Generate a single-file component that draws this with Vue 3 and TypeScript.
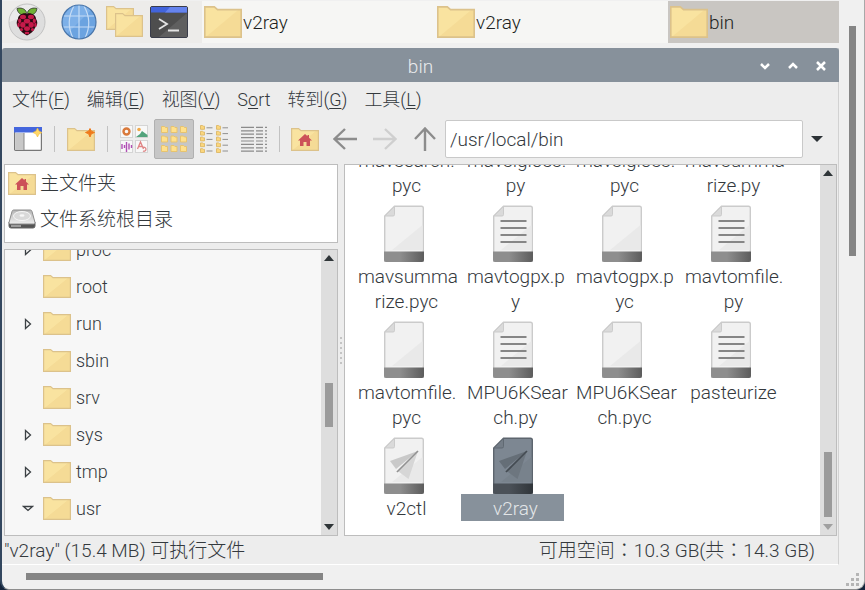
<script setup lang="ts">
import { ref } from 'vue'

interface FileEntry {
  name: string
  kind: 'blank' | 'script' | 'exec'
}
interface TreeNode {
  name: string
  state: 'closed' | 'open' | 'leaf'
}

const tasks = ['v2ray', 'v2ray', 'bin']
const menus = [
  { text: '文件', key: 'F' },
  { text: '编辑', key: 'E' },
  { text: '视图', key: 'V' },
  { text: 'Sort', key: '' },
  { text: '转到', key: 'G' },
  { text: '工具', key: 'L' },
]
const tree: TreeNode[] = [
  { name: 'proc', state: 'closed' },
  { name: 'root', state: 'leaf' },
  { name: 'run', state: 'closed' },
  { name: 'sbin', state: 'leaf' },
  { name: 'srv', state: 'leaf' },
  { name: 'sys', state: 'closed' },
  { name: 'tmp', state: 'closed' },
  { name: 'usr', state: 'open' },
]
// Names carry their own line breaks, as the icon view wraps by character.
const files: FileEntry[] = [
  { name: 'mavsearch.\npyc', kind: 'blank' },
  { name: 'mavsigloss.\npy', kind: 'script' },
  { name: 'mavsigloss.\npyc', kind: 'blank' },
  { name: 'mavsumma\nrize.py', kind: 'script' },
  { name: 'mavsumma\nrize.pyc', kind: 'blank' },
  { name: 'mavtogpx.p\ny', kind: 'script' },
  { name: 'mavtogpx.p\nyc', kind: 'blank' },
  { name: 'mavtomfile.\npy', kind: 'script' },
  { name: 'mavtomfile.\npyc', kind: 'blank' },
  { name: 'MPU6KSear\nch.py', kind: 'script' },
  { name: 'MPU6KSear\nch.pyc', kind: 'blank' },
  { name: 'pasteurize', kind: 'script' },
  { name: 'v2ctl', kind: 'exec' },
  { name: 'v2ray', kind: 'exec' },
]
const path = ref('/usr/local/bin')
const selected = ref('v2ray')
</script>

<template>
  <div class="viewer">
    <svg class="defs" aria-hidden="true">
      <defs>
        <linearGradient id="gFolder" x1="0" y1="0" x2="1" y2="1">
          <stop offset="0.5" stop-color="#f9e3a0" />
          <stop offset="0.52" stop-color="#f5db96" />
        </linearGradient>
        <linearGradient id="gFoot"><stop offset="0.4" stop-color="#8e8e8e" /><stop offset="1" stop-color="#5c5c5c" /></linearGradient>
        <linearGradient id="gFootSel"><stop offset="0.4" stop-color="#4b5158" /><stop offset="1" stop-color="#30353a" /></linearGradient>
        <linearGradient id="gDisk" x1="0" y1="0" x2="0" y2="1"><stop offset="0" stop-color="#b5b5b5" /><stop offset="1" stop-color="#efefef" /></linearGradient>
      </defs>
      <symbol id="folder" viewBox="0 0 28 23" preserveAspectRatio="none">
        <path d="M.6 22.4V.6h7L10 2.6h17.4v19.8z" fill="url(#gFolder)" stroke="#dcc28b" stroke-width="1.2" />
      </symbol>
      <symbol id="home" viewBox="0 0 28 23">
        <path d="M.6 22.4V.6h7L10 2.6h17.4v19.8z" fill="url(#gFolder)" stroke="#dcc28b" stroke-width="1.2" />
        <path d="M14 6l2.500 2.300V7H18v2.800l3 2.800h-2v5.300h-3.500V14h-3v3.900H9v-5.300H7z" fill="#cc5158" />
      </symbol>
    </svg>

    <div class="desktop">
      <nav class="taskbar">
        <button class="launch raspberry" aria-label="Menu">
          <svg width="38" height="38" viewBox="0 0 38 38">
            <circle cx="19" cy="19" r="18" fill="#dedede" stroke="#c2c2c2" />
            <path d="M1.500 19a17.500 17.500 0 0 1 30-12z" fill="#ebebeb" />
            <path d="M18.500 9.500C17 5 12 4.500 9 5.500c.5 4 3.500 7 8 6.500zM19.500 9.500C21 5 26 4.500 29 5.500c-.5 4-3.500 7-8 6.500z" fill="#70b237" stroke="#333" stroke-width=".8" />
            <path d="M19 10.500c5-1 9 2 9 5.500 2 3 1.500 6-.5 8-1.500 4-5 7-8.500 8.500-3.500-1.500-7-4.500-8.500-8.500-2-2-2.500-5-.5-8 0-3.500 4-6.500 9-5.500z" fill="#2a0a12" />
            <g fill="#c51a4a">
              <ellipse cx="15" cy="14" rx="3" ry="2.200" /><ellipse cx="23" cy="14" rx="3" ry="2.200" />
              <ellipse cx="19" cy="18.200" rx="3.200" ry="2.400" /><ellipse cx="11.700" cy="17.800" rx="1.600" ry="2.400" />
              <ellipse cx="26.300" cy="17.800" rx="1.600" ry="2.400" /><ellipse cx="14.800" cy="21.800" rx="2.700" ry="2.900" />
              <ellipse cx="23.200" cy="21.800" rx="2.700" ry="2.900" /><ellipse cx="10.600" cy="22" rx="1.200" ry="2.200" />
              <ellipse cx="27.400" cy="22" rx="1.200" ry="2.200" /><ellipse cx="19" cy="25.600" rx="3" ry="2.300" />
              <ellipse cx="13.500" cy="26.500" rx="1.600" ry="1.600" /><ellipse cx="24.500" cy="26.500" rx="1.600" ry="1.600" />
              <ellipse cx="19" cy="30" rx="2.400" ry="1.300" />
            </g>
          </svg>
        </button>
        <button class="launch globe" aria-label="Web Browser">
          <svg width="36" height="36" viewBox="0 0 36 36">
            <circle cx="18" cy="18" r="17" fill="#6ba3e0" />
            <path d="M6 30A17 17 0 0 1 30 6z" fill="#7db0e8" />
            <g fill="none" stroke="#c5dcf5" stroke-width="1.200"><path d="M3 12h30M1.500 23h33M18 1v34" /><path d="M13 2Q4 18 12 34M23 2Q32 18 24 34" /></g>
            <circle cx="18" cy="18" r="17" fill="none" stroke="#4a76aa" stroke-width="1.200" />
          </svg>
        </button>
        <button class="launch folders" aria-label="File Manager">
          <svg width="38" height="32" viewBox="0 0 38 32">
            <use href="#folder" x="0" y="0" width="28" height="24" /><use href="#folder" x="9" y="7" width="28" height="24" />
          </svg>
        </button>
        <button class="launch terminal" aria-label="Terminal">
          <svg width="38" height="32" viewBox="0 0 38 32">
            <rect x=".5" y=".5" width="37" height="31" rx="1.500" fill="#4e4e4e" stroke="#3a3d4a" />
            <path d="M37 7v24H9z" fill="#5f5f5f" /><path d="M1 1h36v5.500H1z" fill="#4264dc" /><path d="M20 1h17v5.500H15z" fill="#6684ee" />
            <path d="M9 13l8 5-8 5M18 24.500h11" fill="none" stroke="#e4e4e4" stroke-width="1.800" />
          </svg>
        </button>
        <button v-for="(t, i) in tasks" :key="i" class="task" :class="{ current: i === 2, first: i === 0 }">
          <svg width="38" height="32"><use href="#folder" width="38" height="32" /></svg>{{ t }}
        </button>
      </nav>

      <main class="window">
        <header class="titlebar">
          <h1>bin</h1>
          <div class="controls">
            <button aria-label="Minimize"><svg width="12" height="12"><path d="M2 4l4 4 4-4" /></svg></button>
            <button aria-label="Maximize"><svg width="12" height="12"><path d="M2 8l4-4 4 4" /></svg></button>
            <button aria-label="Close"><svg width="12" height="12"><path d="M2 2l8 8M10 2l-8 8" /></svg></button>
          </div>
        </header>

        <nav class="menubar">
          <button v-for="m in menus" :key="m.text">
            <template v-if="m.key">{{ m.text }}(<u>{{ m.key }}</u>)</template>
            <template v-else>S<u>o</u>rt</template>
          </button>
        </nav>

        <div class="toolbar">
          <button class="tool" aria-label="New window">
            <svg width="28" height="24" viewBox="0 0 28 24">
              <rect x=".6" y=".6" width="26.800" height="22.800" rx="1" fill="#fff" stroke="#777" stroke-width="1.200" />
              <path d="M1.200 6H10v17H1.200z" fill="#c8c8c8" /><path d="M10 6v17" stroke="#8a8a8a" /><path d="M0 0h28v5.500H0z" fill="#4466dd" />
              <path d="M23.500 1l1.500 3 3 1.500-3 1.500-1.500 3L22 7l-3-1.500L22 4z" fill="#ffd76a" stroke="#f2bd3a" stroke-width=".6" />
            </svg>
          </button>
          <span class="sep"></span>
          <button class="tool" aria-label="New folder">
            <svg width="29" height="24" viewBox="0 0 29 24"><use href="#folder" x="0" y="1" width="28" height="23" /><path d="M23 1.500l1.300 2.700L27.500 5.500l-3.200 1.300L23 10l-1.300-3.200-3.200-1.300 3.200-1.300z" fill="#ef7a1a" stroke="#ef7a1a" /></svg>
          </button>
          <span class="sep"></span>
          <button class="tool" aria-label="Thumbnail view">
            <svg width="28" height="28" viewBox="0 0 28 28">
              <g fill="#f8f8f8" stroke="#d5d5d5"><rect x=".5" y=".5" width="12" height="12" /><rect x="15.500" y=".5" width="12" height="12" /><rect x=".5" y="15.500" width="12" height="12" /><rect x="15.500" y="15.500" width="12" height="12" /></g>
              <circle cx="6.500" cy="6.500" r="3" fill="none" stroke="#d9793b" stroke-width="2.400" />
              <circle cx="19" cy="4.500" r="1.800" fill="#f0a94a" /><path d="M16 12l4-3 2-3 5.500 4v2z" fill="#52a37c" />
              <path d="M2 19v5M4.500 20v3M6.500 17v10M9 18.500v6M11.500 20v3" stroke="#b14fb5" stroke-width="1.400" />
              <path d="M17.500 24l3-7 3 7M18.500 21.500h4M23 26a2 2 0 1 0 0-3.500" fill="none" stroke="#df8585" stroke-width="1.300" />
            </svg>
          </button>
          <button class="tool active" aria-label="Icon view" aria-pressed="true">
            <svg width="26" height="26" viewBox="0 0 26 26">
              <g v-for="n in 9" :key="n" :transform="`translate(${((n - 1) % 3) * 9.5} ${Math.floor((n - 1) / 3) * 9.5})`"><path d="M.5 6.500v-6h3l1 1H6.500v5z" fill="#ffe08c" stroke="#e6c36f" /></g>
            </svg>
          </button>
          <button class="tool" aria-label="Compact view">
            <svg width="28" height="28" viewBox="0 0 28 28">
              <g v-for="n in 10" :key="n" :transform="`translate(${((n - 1) % 2) * 16} ${Math.floor((n - 1) / 2) * 5.8})`"><path d="M.5 4.300V.5h2l1 .7h1v3.100z" fill="#fbd67d" stroke="#dcb867" stroke-width=".9" /><path d="M6.500 2.800h6" stroke="#909090" /></g>
            </svg>
          </button>
          <button class="tool" aria-label="List view">
            <svg width="26" height="26" viewBox="0 0 26 26"><path v-for="n in 8" :key="n" :d="`M0 ${n * 3.4 - 2}h13M15 ${n * 3.4 - 2}h7M24 ${n * 3.4 - 2}h2`" stroke="#8b8b8b" stroke-width="1.200" /></svg>
          </button>
          <span class="sep near"></span>
          <button class="tool" aria-label="Home"><svg width="28" height="23"><use href="#home" width="28" height="23" /></svg></button>
          <button class="tool arrow" aria-label="Back"><svg width="24" height="24"><path d="M24 12H1.500M12 2L1.500 12 12 22" /></svg></button>
          <button class="tool arrow off" aria-label="Forward" disabled><svg width="24" height="24"><path d="M0 12h22.500M12 2l10.500 10L12 22" /></svg></button>
          <button class="tool arrow" aria-label="Up"><svg width="24" height="24"><path d="M12 24V1.500M2 12L12 1.500 22 12" /></svg></button>
          <input v-model="path" class="path" type="text" aria-label="Location" />
          <button class="drop" aria-label="Show history"><svg width="12" height="6"><path d="M0 0h12L6 6z" fill="#2c3236" /></svg></button>
        </div>

        <div class="body">
          <aside class="side">
            <div class="places">
              <button><svg width="28" height="23"><use href="#home" width="28" height="23" /></svg>主文件夹</button>
              <button>
                <svg width="28" height="20" viewBox="0 0 28 20">
                  <path d="M1 13v4q0 2 2 2h22q2 0 2-2v-4z" fill="#555" stroke="#666" />
                  <path d="M5.500 1h17q1 0 1.500 1.500L27 13.500q0 1.500-1.500 1.500h-23Q1 15 1 13.500L4 2.500Q4.500 1 5.500 1z" fill="url(#gDisk)" stroke="#8d8d8d" />
                  <ellipse cx="14" cy="7" rx="8.500" ry="4.500" fill="#d9d9d9" stroke="#f6f6f6" /><ellipse cx="14" cy="6.500" rx="2.500" ry="1.200" fill="#f7f7f7" />
                  <path d="M3 17h10" stroke="#b5b5b5" stroke-width="1.500" />
                </svg>文件系统根目录
              </button>
            </div>
            <div class="treebox">
              <ul class="tree">
                <li v-for="n in tree" :key="n.name">
                  <button>
                    <svg class="twist" width="12" height="14" viewBox="0 0 12 14">
                      <path v-if="n.state === 'closed'" d="M3.500 2.500l5 4.500-5 4.500z" />
                      <path v-else-if="n.state === 'open'" d="M1.500 4.500h9L6 8.500z" />
                    </svg>
                    <svg width="28" height="23"><use href="#folder" width="28" height="23" /></svg>{{ n.name }}
                  </button>
                </li>
              </ul>
              <div class="scroll tree-scroll">
                <svg width="10" height="6"><path d="M0 6h10L5 0z" /></svg>
                <span class="room"></span><span class="thumb"></span><span class="rest"></span>
                <svg width="10" height="6"><path d="M0 0h10L5 6z" /></svg>
              </div>
            </div>
          </aside>
          <div class="grip"><i v-for="n in 6" :key="n"></i></div>
          <section class="files">
            <div class="grid">
              <button v-for="f in files" :key="f.name" class="file" :class="{ selected: f.name === selected }" @click="selected = f.name">
                <svg width="40" height="57" viewBox="0 0 40 57">
                  <path class="sheet" d="M10.500 1.200h27q1.800 0 1.800 1.800v53H.7V11z" />
                  <path class="shine" d="M38.500 20v25H8z" />
                  <path class="fold" d="M10.500 1.500v8q0 1.500-1.500 1.500H1z" />
                  <path v-if="f.kind === 'script'" d="M7.500 16h26M7.500 23h26M7.500 30h26M7.500 37h26" stroke="#868686" stroke-width="2.200" />
                  <g v-if="f.kind === 'exec'" class="plane">
                    <path d="M34 14L6 24l6 8z" /><path class="dark" d="M34 14L12 35l2.500-.5 10 7.500z" /><path class="line" d="M34 14L13 35" />
                  </g>
                  <path :fill="f.name === selected ? 'url(#gFootSel)' : 'url(#gFoot)'" d="M0 46.500h40v8.500q0 2-2 2H2q-2 0-2-2z" />
                </svg>
                <span class="label">{{ f.name }}</span>
              </button>
            </div>
            <div class="scroll file-scroll">
              <svg width="10" height="6"><path d="M0 6h10L5 0z" /></svg>
              <span class="room"></span><span class="thumb"></span><span class="rest"></span>
              <svg class="faint" width="10" height="6"><path d="M0 0h10L5 6z" /></svg>
            </div>
          </section>
        </div>

        <footer class="status"><span>"v2ray" (15.4 MB) 可执行文件</span><span class="space">可用空间：10.3 GB(共：14.3 GB)</span></footer>
      </main>
    </div>

    <div class="vbar"><span></span></div>
    <div class="hbar"><span></span></div>
    <svg class="corner" width="14" height="14"><path d="M10 0h3v3h-3zM5 5h3v3H5zM10 5h3v3h-3zM0 10h3v3H0zM5 10h3v3H5zM10 10h3v3h-3z" fill="#b5b5b5" /></svg>
  </div>
</template>

<style>
body { margin: 0; background: #14243c; }
</style>

<style scoped>
* { box-sizing: border-box; }
button, input { font: inherit; color: inherit; border: 0; background: none; padding: 0; margin: 0; }
svg { display: block; flex: none; }
.defs { position: absolute; width: 0; height: 0; }

.viewer {
  display: grid;
  grid-template: minmax(0, 1fr) 24px / minmax(0, 1fr) 25px;
  height: 100vh;
  border-left: 2px solid #33475f;
  border-right: 1px solid #a8a8a8;
  border-bottom: 1px solid #8d8d8d;
  border-radius: 0 0 9px 9px;
  background: #f0f0f0;
  color: #34393d;
  font: 300 19px/25px Roboto, "Noto Sans CJK SC", sans-serif;
  overflow: hidden;
}
.desktop { display: flex; flex-direction: column; min-width: 0; min-height: 0; padding-top: 1px; }

.taskbar { display: flex; align-items: stretch; height: 42px; margin-bottom: 5px; background: #edecea; overflow: hidden; flex: none; }
.launch { display: flex; flex: none; align-items: center; justify-content: center; width: 45px; }
.raspberry { width: 50px; }
.globe { width: 53px; }
.folders { width: 40px; }
.terminal { width: 47px; }
.task { display: flex; flex: none; align-items: center; gap: 1px; width: 233px; padding-left: 2px; background: #f6f6f4; color: #1d1f21; }
.first { margin-left: 10px; }
.task.current { background: #c9c6c2; }

.window { display: flex; flex: 1; flex-direction: column; min-height: 0; background: #ededed; border-right: 1px solid #d2d2d2; border-bottom: 1px solid #fff; }
.titlebar { display: grid; grid-template-columns: 1fr auto 1fr; align-items: center; height: 34px; padding-top: 2px; flex: none; background: #87919b; color: #e9ebed; border-radius: 3px 3px 0 0; margin-right: -1px; }
.titlebar h1 { grid-column: 2; margin: 0; font: inherit; }
.controls { display: flex; justify-content: flex-end; gap: 16px; padding-right: 12px; }
.controls path { fill: none; stroke: #fff; stroke-width: 2.5; }

.menubar { display: flex; gap: 17px; height: 36px; padding: 0 0 2px 10px; align-items: center; flex: none; font-size: 18px; }
u { text-decoration-thickness: 1px; text-underline-offset: 2px; }

.toolbar { display: flex; align-items: center; height: 42px; padding: 0 7px 0 6px; flex: none; }
.tool { display: flex; flex: none; align-items: center; justify-content: center; width: 40px; height: 40px; }
.tool.active { background: #c6c6c6; border: 1px solid #b0b0b0; border-radius: 2px; }
.arrow path { fill: none; stroke: #8c8c8c; stroke-width: 2.4; }
.off path { stroke: #cfcfcf; }
.sep { flex: none; width: 1px; height: 26px; margin: 0 6px; background: #c2c2c2; }
.near { margin: 0 5px; }
.path { flex: 1; min-width: 0; height: 38px; padding: 0 4px; background: #fff; border: 1px solid #c9c9c9; border-radius: 2px; }
.drop { display: flex; flex: none; align-items: center; justify-content: center; width: 28px; height: 38px; }

.body { display: flex; flex: 1; min-height: 0; padding: 4px 1px 0 2px; }
.side { display: flex; flex-direction: column; gap: 6px; width: 334px; flex: none; min-height: 0; }
.places { flex: none; height: 79px; background: #fff; border: 1px solid #bdbdbd; }
.places button { display: flex; align-items: center; gap: 4px; width: 100%; height: 36px; padding-left: 3px; }
.treebox { display: flex; flex: 1; min-height: 0; background: #f7f7f7; border: 1px solid #bdbdbd; overflow: hidden; }
.tree { flex: 1; list-style: none; margin: -19px 0 0; padding: 0; font-size: 18px; }
.tree button { display: flex; align-items: center; width: 100%; height: 37px; padding-left: 17px; gap: 5px; }
.twist { margin-right: 4px; }
.twist path { fill: none; stroke: #3c4145; stroke-width: 1.3; }

.scroll { display: flex; flex: none; flex-direction: column; align-items: center; width: 16px; padding: 5px 0; background: #dedede; }
.scroll path { fill: #2f3538; }
.scroll .faint path { fill: #a0a0a0; }
.thumb { width: 8px; background: #9b9b9b; }
.tree-scroll .room { flex: 121; }
.tree-scroll .thumb { flex: 43; }
.tree-scroll .rest { flex: 96; }
.file-scroll .room { flex: 276; }
.file-scroll .thumb { flex: 65; }
.file-scroll .rest { flex: 7; }

.grip { display: flex; flex-direction: column; align-items: center; justify-content: center; gap: 3px; width: 6px; flex: none; }
.grip i { width: 2px; height: 2px; background: #c4c4c4; }

.files { display: flex; flex: 1; min-width: 0; background: #fff; border: 1px solid #bdbdbd; overflow: hidden; }
.grid { display: grid; flex: 1; grid-template-columns: repeat(auto-fill, 109px); grid-auto-rows: 116px; margin-top: -76px; padding-left: 4px; align-content: start; }
.file { display: flex; flex-direction: column; align-items: center; justify-content: flex-start; }
.label { width: 103px; padding: 2px 0 0 6px; white-space: pre; text-align: center; }
.sheet { fill: #f1f1f1; stroke: #cbcbcb; stroke-width: 1.4; }
.shine { fill: #e9e9e9; }
.fold { fill: #dadada; stroke: #cbcbcb; }
.plane path { fill: #c9c9c9; }
.plane .dark { fill: #d6d6d6; }
.plane .line { fill: none; stroke: #929292; stroke-width: 1.6; }
.selected .label { background: #87919b; color: #e3e6e8; }
.selected .sheet { fill: #7d8792; stroke: #5d656e; }
.selected .shine { fill: #78828c; }
.selected .fold { fill: #737c86; stroke: #606972; }
.selected .plane path { fill: #656e77; }
.selected .plane .dark { fill: #6d767f; }
.selected .plane .line { fill: none; stroke: #444b52; }

.status { display: flex; justify-content: space-between; align-items: center; height: 28px; padding: 0 23px 0 2px; flex: none; }
.space { font-family: Roboto, "Noto Sans CJK TC", sans-serif; }

.vbar { padding: 26px 8px 0 10px; }
.vbar span { display: block; height: 230px; background: #858585; }
.hbar { padding: 8px 0 0 24px; }
.hbar span { display: block; width: 297px; height: 7px; background: #858585; }
.corner { place-self: end; margin: 0 4px 2px 0; }
</style>
